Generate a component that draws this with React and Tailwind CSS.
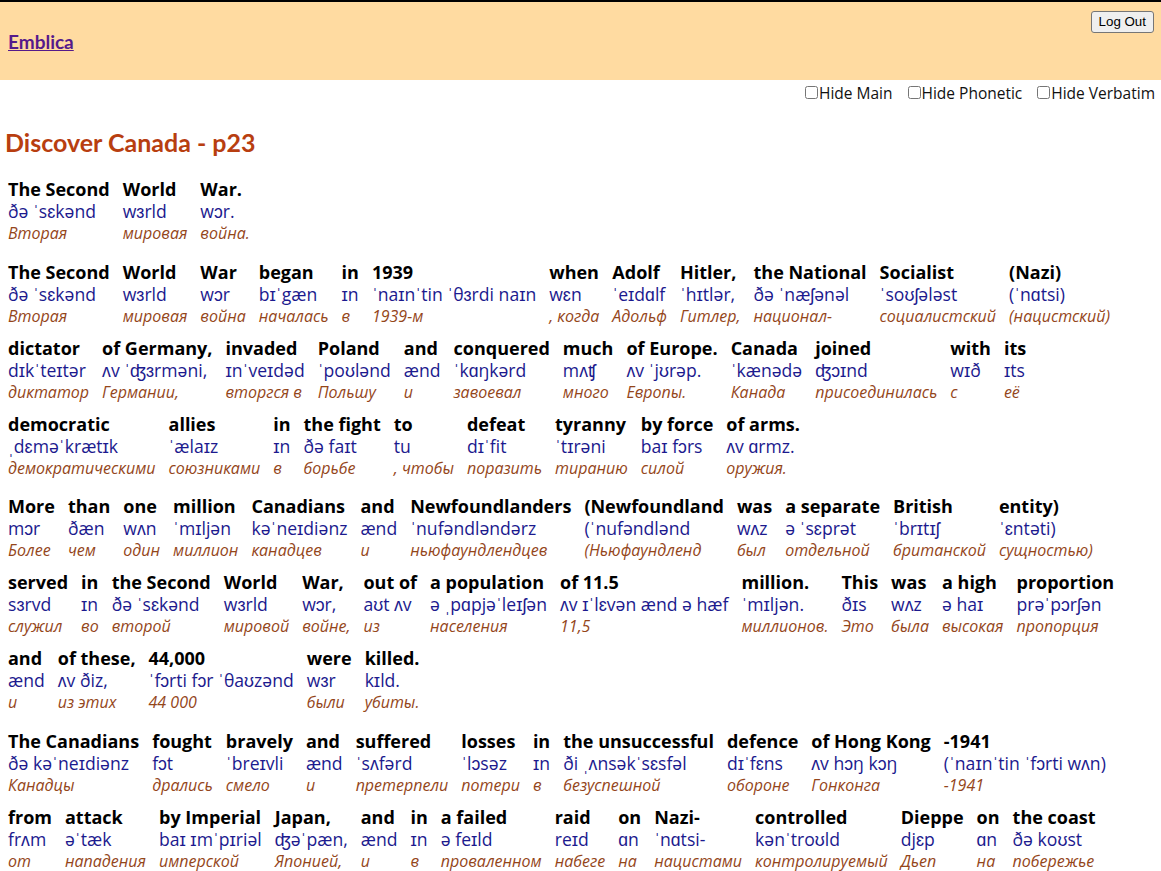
import { useState } from 'react';

const paragraphs = [
  [
    [
      ['The Second', 'ðə ˈsɛkənd', 'Вторая'],
      ['World', 'wɜrld', 'мировая'],
      ['War.', 'wɔr.', 'война.'],
    ],
  ],
  [
    [
      ['The Second', 'ðə ˈsɛkənd', 'Вторая'],
      ['World', 'wɜrld', 'мировая'],
      ['War', 'wɔr', 'война'],
      ['began', 'bɪˈgæn', 'началась'],
      ['in', 'ɪn', 'в'],
      ['1939', 'ˈnaɪnˈtin ˈθɜrdi naɪn', '1939-м'],
      ['when', 'wɛn', ', когда'],
      ['Adolf', 'ˈeɪdɑlf', 'Адольф'],
      ['Hitler,', 'ˈhɪtlər,', 'Гитлер,'],
      ['the National', 'ðə ˈnæʃənəl', 'национал-'],
      ['Socialist', 'ˈsoʊʃələst', 'социалистский'],
      ['(Nazi)', '(ˈnɑtsi)', '(нацистский)'],
    ],
    [
      ['dictator', 'dɪkˈteɪtər', 'диктатор'],
      ['of Germany,', 'ʌv ˈʤɜrməni,', 'Германии,'],
      ['invaded', 'ɪnˈveɪdəd', 'вторгся в'],
      ['Poland', 'ˈpoʊlənd', 'Польшу'],
      ['and', 'ænd', 'и'],
      ['conquered', 'ˈkɑŋkərd', 'завоевал'],
      ['much', 'mʌʧ', 'много'],
      ['of Europe.', 'ʌv ˈjʊrəp.', 'Европы.'],
      ['Canada', 'ˈkænədə', 'Канада'],
      ['joined', 'ʤɔɪnd', 'присоединилась'],
      ['with', 'wɪð', 'с'],
      ['its', 'ɪts', 'её'],
    ],
    [
      ['democratic', 'ˌdɛməˈkrætɪk', 'демократическими'],
      ['allies', 'ˈælaɪz', 'союзниками'],
      ['in', 'ɪn', 'в'],
      ['the fight', 'ðə faɪt', 'борьбе'],
      ['to', 'tu', ', чтобы'],
      ['defeat', 'dɪˈfit', 'поразить'],
      ['tyranny', 'ˈtɪrəni', 'тиранию'],
      ['by force', 'baɪ fɔrs', 'силой'],
      ['of arms.', 'ʌv ɑrmz.', 'оружия.'],
    ],
  ],
  [
    [
      ['More', 'mɔr', 'Более'],
      ['than', 'ðæn', 'чем'],
      ['one', 'wʌn', 'один'],
      ['million', 'ˈmɪljən', 'миллион'],
      ['Canadians', 'kəˈneɪdiənz', 'канадцев'],
      ['and', 'ænd', 'и'],
      ['Newfoundlanders', 'ˈnufəndləndərz', 'ньюфаундлендцев'],
      ['(Newfoundland', '(ˈnufəndlənd', '(Ньюфаундленд'],
      ['was', 'wʌz', 'был'],
      ['a separate', 'ə ˈsɛprət', 'отдельной'],
      ['British', 'ˈbrɪtɪʃ', 'британской'],
      ['entity)', 'ˈɛntəti)', 'сущностью)'],
    ],
    [
      ['served', 'sɜrvd', 'служил'],
      ['in', 'ɪn', 'во'],
      ['the Second', 'ðə ˈsɛkənd', 'второй'],
      ['World', 'wɜrld', 'мировой'],
      ['War,', 'wɔr,', 'войне,'],
      ['out of', 'aʊt ʌv', 'из'],
      ['a population', 'ə ˌpɑpjəˈleɪʃən', 'населения'],
      ['of 11.5', 'ʌv ɪˈlɛvən ænd ə hæf', '11,5'],
      ['million.', 'ˈmɪljən.', 'миллионов.'],
      ['This', 'ðɪs', 'Это'],
      ['was', 'wʌz', 'была'],
      ['a high', 'ə haɪ', 'высокая'],
      ['proportion', 'prəˈpɔrʃən', 'пропорция'],
    ],
    [
      ['and', 'ænd', 'и'],
      ['of these,', 'ʌv ðiz,', 'из этих'],
      ['44,000', 'ˈfɔrti fɔr ˈθaʊzənd', '44 000'],
      ['were', 'wɜr', 'были'],
      ['killed.', 'kɪld.', 'убиты.'],
    ],
  ],
  [
    [
      ['The Canadians', 'ðə kəˈneɪdiənz', 'Канадцы'],
      ['fought', 'fɔt', 'дрались'],
      ['bravely', 'ˈbreɪvli', 'смело'],
      ['and', 'ænd', 'и'],
      ['suffered', 'ˈsʌfərd', 'претерпели'],
      ['losses', 'ˈlɔsəz', 'потери'],
      ['in', 'ɪn', 'в'],
      ['the unsuccessful', 'ði ˌʌnsəkˈsɛsfəl', 'безуспешной'],
      ['defence', 'dɪˈfɛns', 'обороне'],
      ['of Hong Kong', 'ʌv hɔŋ kɔŋ', 'Гонконга'],
      ['-1941', '(ˈnaɪnˈtin ˈfɔrti wʌn)', '-1941'],
    ],
    [
      ['from', 'frʌm', 'от'],
      ['attack', 'əˈtæk', 'нападения'],
      ['by Imperial', 'baɪ ɪmˈpɪriəl', 'имперской'],
      ['Japan,', 'ʤəˈpæn,', 'Японией,'],
      ['and', 'ænd', 'и'],
      ['in', 'ɪn', 'в'],
      ['a failed', 'ə feɪld', 'проваленном'],
      ['raid', 'reɪd', 'набеге'],
      ['on', 'ɑn', 'на'],
      ['Nazi-', 'ˈnɑtsi-', 'нацистами'],
      ['controlled', 'kənˈtroʊld', 'контролируемый'],
      ['Dieppe', 'djɛp', 'Дьеп'],
      ['on', 'ɑn', 'на'],
      ['the coast', 'ðə koʊst', 'побережье'],
    ],
  ],
];

function Word({ word, hide }) {
  const [main, phonetic, verbatim] = word;
  return (
    <div className="flex flex-col whitespace-nowrap">
      <span className={`text-[18px] leading-[22px] font-bold text-black ${hide.main ? 'invisible' : ''}`}>
        {main}
      </span>
      <span className={`text-[17.6px] leading-[22px] text-[#1c1a8e] ${hide.phonetic ? 'invisible' : ''}`}>
        {phonetic}
      </span>
      <span className={`text-[16px] leading-[22px] italic text-[#94461a] ${hide.verbatim ? 'invisible' : ''}`}>
        {verbatim}
      </span>
    </div>
  );
}

function Toggle({ label, checked, onChange }) {
  return (
    <label className="flex items-center">
      <input
        type="checkbox"
        checked={checked}
        onChange={onChange}
        className="w-[13px] h-[13px] ml-[4px] mr-[1px]"
      />
      <span>{label}</span>
    </label>
  );
}

export default function App() {
  const [hide, setHide] = useState({ main: false, phonetic: false, verbatim: false });
  const flip = (key) => () => setHide((h) => ({ ...h, [key]: !h[key] }));

  return (
    <div className="min-h-[871px] bg-white font-['Open_Sans',sans-serif]">
      <header className="flex items-start justify-between h-[80px] border-t-2 border-black bg-[#ffdba1] pl-[8px] pr-[7px]">
        <a
          href="#"
          className="self-center mt-[2px] font-['Lato',sans-serif] font-bold text-[19px] text-[#551a8b] underline"
        >
          Emblica
        </a>
        <button
          type="button"
          className="mt-[9px] px-[7px] py-[1px] font-['Liberation_Sans',Arial,sans-serif] text-[13.33px] leading-[18px] text-black bg-[#efefef] border border-[#767676] rounded-[3px]"
        >
          Log Out
        </button>
      </header>

      <div className="flex justify-end gap-[11px] pr-[6px] pt-[3px] h-[22px] text-[15.5px] leading-[22px] text-[#111]">
        <Toggle label="Hide Main" checked={hide.main} onChange={flip('main')} />
        <Toggle label="Hide Phonetic" checked={hide.phonetic} onChange={flip('phonetic')} />
        <Toggle label="Hide Verbatim" checked={hide.verbatim} onChange={flip('verbatim')} />
      </div>

      <h1 className="mt-[24px] pl-[5px] font-['Lato',sans-serif] font-bold text-[25px] leading-[32px] text-[#b83e10]">
        Discover Canada - p23
      </h1>

      <div className="flex flex-col gap-[16.5px] mt-[20px] px-[8px]">
        {paragraphs.map((lines, p) => (
          <div key={p} className="flex flex-col gap-[10px]">
            {lines.map((line, l) => (
              <div key={l} className="flex gap-x-[13px]">
                {line.map((w, i) => (
                  <Word key={i} word={w} hide={hide} />
                ))}
              </div>
            ))}
          </div>
        ))}
      </div>
    </div>
  );
}
